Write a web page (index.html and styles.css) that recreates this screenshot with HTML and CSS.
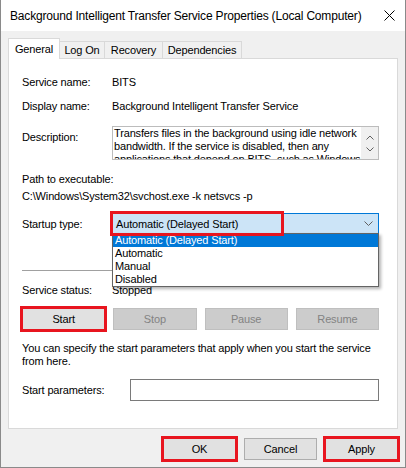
FILE: index.html
```html
<!DOCTYPE html>
<html lang="en">
<head>
<meta charset="utf-8">
<title>BITS Properties</title>
<link rel="stylesheet" href="styles.css">
</head>
<body>
<div class="window">
  <div class="titlebar">
    <span class="title">Background Intelligent Transfer Service Properties (Local Computer)</span>
    <svg class="close" width="11" height="11" viewBox="0 0 11 11"><path d="M0.5 0.5 L10.5 10.5 M10.5 0.5 L0.5 10.5" stroke="#000" stroke-width="1" fill="none"/></svg>
  </div>
  <div class="main">
    <div class="tabs">
      <div class="tab active t-general">General</div>
      <div class="tab t-logon">Log On</div>
      <div class="tab t-recovery">Recovery</div>
      <div class="tab t-deps">Dependencies</div>
    </div>
    <div class="panel">
      <div class="row r-name"><span class="label">Service name:</span><span>BITS</span></div>
      <div class="row r-display"><span class="label">Display name:</span><span>Background Intelligent Transfer Service</span></div>
      <div class="row r-desc">
        <span class="label label-top">Description:</span>
        <div class="textbox">
          <div class="textbox-text">Transfers files in the background using idle network<br>bandwidth. If the service is disabled, then any<br>applications that depend on BITS, such as Windows</div>
          <div class="vscroll">
            <svg width="8" height="5" viewBox="0 0 8 5"><path d="M0.5 4.5 L4 1 L7.5 4.5" stroke="#606060" stroke-width="1" fill="none"/></svg>
            <svg width="8" height="5" viewBox="0 0 8 5"><path d="M0.5 0.5 L4 4 L7.5 0.5" stroke="#606060" stroke-width="1" fill="none"/></svg>
          </div>
        </div>
      </div>
      <div class="path-label">Path to executable:</div>
      <div class="path-value">C:\Windows\System32\svchost.exe -k netsvcs -p</div>
      <div class="row r-startup">
        <span class="label label-startup">Startup type:</span>
        <div class="combo">
          <span class="combo-text">Automatic (Delayed Start)</span>
          <svg class="combo-arrow" width="9" height="5" viewBox="0 0 9 5"><path d="M0.5 0.5 L4.5 4.5 L8.5 0.5" stroke="#606060" stroke-width="1" fill="none"/></svg>
          <div class="combo-mark"></div>
          <ul class="dropdown">
            <li class="selected">Automatic (Delayed Start)</li>
            <li>Automatic</li>
            <li>Manual</li>
            <li>Disabled</li>
          </ul>
        </div>
      </div>
      <div class="separator"></div>
      <div class="row r-status"><span class="label">Service status:</span><span>Stopped</span></div>
      <div class="svc-buttons">
        <button class="btn hl">Start</button>
        <button class="btn disabled">Stop</button>
        <button class="btn disabled">Pause</button>
        <button class="btn disabled">Resume</button>
      </div>
      <p class="hint">You can specify the start parameters that apply when you start the service<br>from here.</p>
      <div class="row r-params">
        <span class="label label-params">Start parameters:</span>
        <div class="input"></div>
      </div>
    </div>
    <div class="footer">
      <button class="btn default hl">OK</button>
      <button class="btn">Cancel</button>
      <button class="btn hl">Apply</button>
    </div>
  </div>
</div>
</body>
</html>
```
FILE: styles.css
```css
* { box-sizing: border-box; }
html, body { margin: 0; padding: 0; }
body {
  width: 406px;
  height: 468px;
  overflow: hidden;
  background: #ffffff;
  font-family: "Liberation Sans", Arial, sans-serif;
  font-size: 11px;
  letter-spacing: -0.15px;
  color: #000;
}
.window {
  width: 406px;
  height: 468px;
  border: 1px solid #8a8a8a;
  border-top: none;
  display: flex;
  flex-direction: column;
  background: #f0f0f0;
}
.titlebar {
  height: 31px;
  flex: none;
  background: #fff;
  display: flex;
  align-items: center;
  padding: 0 10px 0 9px;
}
.title {
  font-size: 12px;
  letter-spacing: -0.18px;
  white-space: nowrap;
}
.close { margin-left: auto; }
.main {
  flex: 1;
  padding: 7px 7px 0 7px;
  display: flex;
  flex-direction: column;
}
.tabs {
  display: flex;
  align-items: flex-end;
  height: 20px;
}
.tab {
  height: 17px;
  border: 1px solid #d9d9d9;
  border-bottom: none;
  background: #f0f0f0;
  display: flex;
  align-items: center;
  justify-content: center;
  margin-left: -1px;
}
.tab.active {
  height: 21px;
  margin-left: 0;
  margin-bottom: -1px;
  background: #fff;
  position: relative;
  z-index: 1;
}
.t-general { width: 52px; }
.t-logon { width: 46px; }
.t-recovery { width: 59px; }
.t-deps { width: 80px; }
.panel {
  height: 371px;
  background: #fff;
  border: 1px solid #d9d9d9;
  padding: 16px 18px 0 13px;
  display: flex;
  flex-direction: column;
  position: relative;
}
.row {
  display: flex;
  align-items: center;
  line-height: 14px;
}
.label { width: 90px; flex: none; }
.r-display { margin-top: 10px; }
.r-desc { margin-top: 13px; align-items: flex-start; }
.label-top { padding-top: 4px; }
.textbox {
  flex: 1;
  height: 34px;
  border: 1px solid #bcbcbc;
  display: flex;
  overflow: hidden;
}
.textbox-text {
  flex: 1;
  padding-left: 1px;
  line-height: 13px;
  white-space: nowrap;
  overflow: hidden;
}
.vscroll {
  width: 17px;
  flex: none;
  background: #f0f0f0;
  display: flex;
  flex-direction: column;
  align-items: center;
  justify-content: space-around;
  padding: 5px 0 4px;
}
.vscroll svg { display: block; }
.path-label { margin-top: 12px; line-height: 14px; }
.path-value { margin-top: 3px; line-height: 14px; }
.r-startup { margin-top: 10px; }
.label-startup { width: 89px; }
.combo {
  flex: 1;
  height: 21px;
  background: #cce4f7;
  border: 1px solid #0078d7;
  display: flex;
  align-items: center;
  padding: 0 5px 0 4px;
  position: relative;
}
.combo-arrow { margin-left: auto; display: block; }
.combo-mark {
  position: absolute;
  left: -2px;
  top: -3px;
  width: 174px;
  height: 25px;
  border: 3px solid #e8151f;
  z-index: 3;
}
.dropdown {
  position: absolute;
  left: 0;
  top: 19px;
  width: 267px;
  margin: 0;
  padding: 0;
  list-style: none;
  background: #fff;
  border: 1px solid #646464;
  box-shadow: 2px 2px 3px rgba(0,0,0,0.3);
  z-index: 2;
}
.dropdown li {
  height: 13px;
  line-height: 13px;
  padding-left: 2px;
  white-space: nowrap;
}
.dropdown li.selected {
  background: #0078d7;
  color: #fff;
}
.separator {
  margin-top: 36px;
  height: 1px;
  background: #a0a0a0;
}
.r-status { margin-top: 12px; }
.svc-buttons {
  margin-top: 11px;
  display: grid;
  grid-template-columns: repeat(4, 1fr);
  column-gap: 8px;
}
.btn {
  height: 22px;
  margin: 0;
  padding: 0;
  font: inherit;
  letter-spacing: inherit;
  color: #000;
  background: #e1e1e1;
  border: 1px solid #adadad;
}
.btn.disabled {
  background: #cccccc;
  border-color: #bfbfbf;
  color: #838383;
}
.btn.default { border-color: #0078d7; }
.hl {
  outline: 3px solid #e8151f;
  outline-offset: -1px;
  position: relative;
  z-index: 1;
}
.hint {
  margin: 12px 0 0;
  line-height: 13px;
}
.r-params { margin-top: 11px; }
.label-params { width: 108px; }
.input {
  flex: 1;
  height: 22px;
  border: 1px solid #7a7a7a;
  background: #fff;
}
.footer {
  margin-top: 9px;
  display: flex;
  justify-content: flex-end;
  column-gap: 8px;
}
.footer .btn { width: 73px; }
```
